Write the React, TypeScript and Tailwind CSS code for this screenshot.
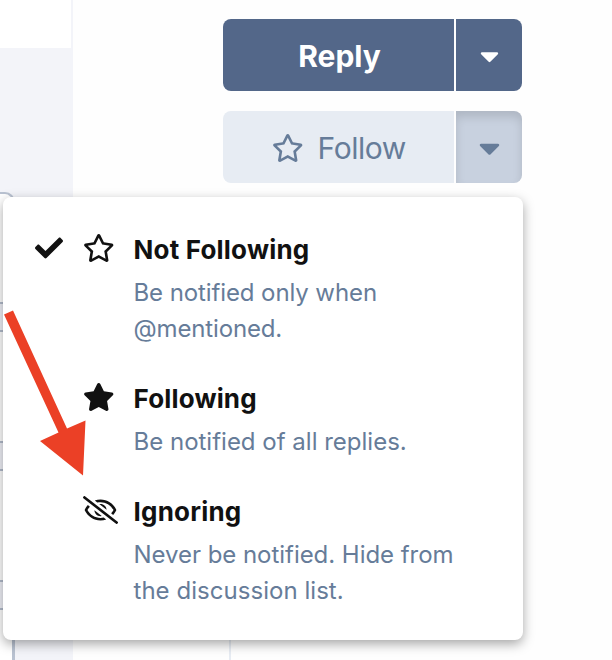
import React from "react";
import { FaCaretDown, FaCheck, FaRegEyeSlash, FaRegStar, FaStar } from "react-icons/fa";

interface FollowOption {
	label: string;
	labelClass: string;
	lines: { text: string; className: string }[];
	icon: React.ReactNode;
	selected?: boolean;
	className: string;
}

const options: FollowOption[] = [
	{
		label: "Not Following",
		labelClass: "tracking-[0.2px]",
		lines: [
			{ text: "Be notified only when", className: "tracking-[-0.1px]" },
			{ text: "@mentioned.", className: "tracking-[-0.15px]" },
		],
		icon: <FaRegStar className="h-7 w-[31.5px]" />,
		selected: true,
		className: "h-[149px]",
	},
	{
		label: "Following",
		labelClass: "tracking-[0.15px]",
		lines: [{ text: "Be notified of all replies.", className: "tracking-[0px]" }],
		icon: <FaStar className="h-7 w-[31.5px]" />,
		className: "h-[113px]",
	},
	{
		label: "Ignoring",
		labelClass: "tracking-[0.2px]",
		lines: [
			{ text: "Never be notified. Hide from", className: "tracking-[-0.04px]" },
			{ text: "the discussion list.", className: "tracking-[0.04px]" },
		],
		icon: <FaRegEyeSlash className="h-7 w-[35px]" />,
		className: "h-[149px]",
	},
];

// Discussion list column, mostly hidden by the open menu
function Sidebar() {
	return (
		<div className="h-[660px] w-[73px] shrink-0 overflow-hidden bg-[#f3f4f9]">
			<div className="h-12 w-[71px] bg-white" />
			<div className="mt-36 h-[468px] w-[15px] rounded-tr-[10px] border-t-2 border-r-[3px] border-[#b9c2d1] bg-white">
				<div className="mt-[108px] h-[30px] border-y-2 border-[#b3bccc] bg-[#f0f1f8]" />
				<div className="mt-[109px] h-[30px] border-y-2 border-[#b3bccc] bg-[#f0f1f8]" />
				<div className="mt-[109px] h-[30px] border-y-2 border-[#b3bccc] bg-[#f0f1f8]" />
			</div>
		</div>
	);
}

function FollowMenu() {
	return (
		<ul className="absolute top-[197px] left-[3px] h-[443px] w-[520px] rounded-lg bg-white pt-8 shadow-[0_4px_12px_rgba(0,0,0,0.35)]">
			{options.map((option) => (
				<li key={option.label} className={`flex text-[#111] ${option.className}`}>
					<div className="flex w-[81px] shrink-0 pt-[5px] pl-8">
						{option.selected && <FaCheck className="h-7 w-7" />}
					</div>
					<div className="w-[49px] shrink-0 pt-[5px] [&>svg]:-ml-[1px]">{option.icon}</div>
					<div className="pl-[0.5px] whitespace-nowrap">
						<div className={`h-[46px] text-[26px] leading-[42px] font-bold ${option.labelClass}`}>
							{option.label}
						</div>
						{option.lines.map((line) => (
							<div
								key={line.text}
								className={`text-2xl leading-9 text-[#667c99] ${line.className}`}
							>
								{line.text}
							</div>
						))}
					</div>
				</li>
			))}
		</ul>
	);
}

export default function App() {
	return (
		<div className="relative flex h-[660px] w-[612px] overflow-hidden bg-[#fefefe] font-['Inter',sans-serif]">
			<Sidebar />
			<div className="flex flex-col gap-5 pt-[19px] pl-[150px]">
				<div className="flex h-[72px] gap-[2px] text-white">
					<button className="flex w-[231px] items-center justify-center rounded-l-lg bg-[#536789] pt-[3px] pl-[2px] text-[30px] font-bold">
						<span className="tracking-[0px]">Reply</span>
					</button>
					<button className="flex w-[66px] items-center justify-center rounded-r-lg bg-[#536789] pt-[2px]">
						<FaCaretDown className="h-[30px] w-[19px]" />
					</button>
				</div>
				<div className="flex h-[72px] gap-[2px] text-[#667c99]">
					<button className="flex w-[231px] items-center justify-center gap-[14px] rounded-l-lg bg-[#e7ecf3] pt-[3px] pl-[1px] text-[30px]">
						<FaRegStar className="h-7 w-[31.5px]" />
						<span className="tracking-[-0.45px]">Follow</span>
					</button>
					<button className="flex w-[66px] items-center justify-center rounded-r-lg bg-[#c8d1df] pt-[3px] shadow-[inset_0_6px_10px_rgba(0,0,0,0.125)]">
						<FaCaretDown className="h-[34px] w-[21px]" />
					</button>
				</div>
				<div className="ml-[6px] h-[458px] w-[2px] bg-[#e7ecf3]" />
			</div>
			<FollowMenu />
			<svg className="absolute top-[300px] left-0" width="100" height="190" viewBox="0 0 100 190" fill="#eb4026">
				<path d="M4 14.5 13 10.5 67 128.5 85.5 120.5 83 175.5 40 141 58.5 132.5Z" />
			</svg>
		</div>
	);
}
